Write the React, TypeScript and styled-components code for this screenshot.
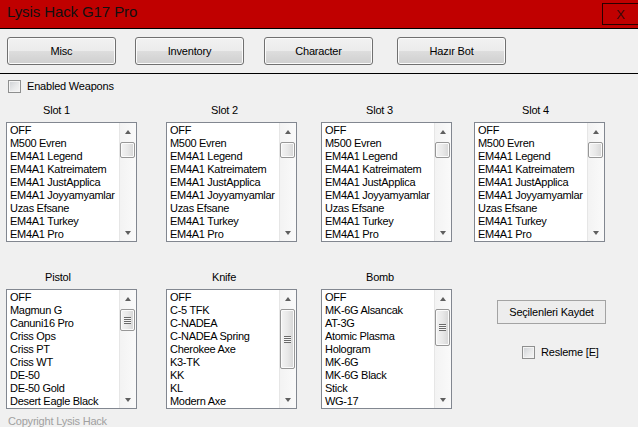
import React from 'react';
import styled, { createGlobalStyle } from 'styled-components';

const GlobalStyle = createGlobalStyle`
  html, body {
    margin: 0;
    padding: 0;
    background: #f0f0f0;
    overflow: hidden;
  }
  * {
    box-sizing: border-box;
  }
`;

const Window = styled.div`
  width: 638px;
  height: 427px;
  background: #f0f0f0;
  display: flex;
  flex-direction: column;
  overflow: hidden;
  font-family: "Liberation Sans", Arial, sans-serif;
  font-size: 11px;
  letter-spacing: -0.2px;
  color: #000;
`;

const TitleBar = styled.div`
  height: 29px;
  flex-shrink: 0;
  background: #c00000;
  border-bottom: 1px solid #000;
  display: flex;
  justify-content: space-between;
  align-items: flex-start;
  padding-left: 7px;
`;

const Title = styled.div`
  font-size: 15px;
  line-height: 24px;
  letter-spacing: -0.1px;
  color: #111;
`;

const CloseButton = styled.div`
  margin-top: 3px;
  width: 36px;
  height: 22px;
  border: 1px solid #2a0000;
  border-right: none;
  display: flex;
  align-items: center;
  justify-content: center;
  font-size: 13px;
  color: #3a0a0a;
`;

const Toolbar = styled.div`
  display: grid;
  grid-template-columns: 128px 129px 133px 109px;
  padding: 8px 0 8px 7px;
  border-bottom: 1px solid #000;
`;

const WinButton = styled.div`
  width: 109px;
  height: 28px;
  border: 1px solid #707070;
  border-radius: 3px;
  background: linear-gradient(to bottom, #f2f2f2 0%, #ebebeb 50%, #dddddd 51%, #cfcfcf 100%);
  box-shadow: inset 0 0 0 1px #fbfbfb;
  display: flex;
  align-items: center;
  justify-content: center;
  line-height: 13px;
`;

const FlatButton = styled.div`
  width: 109px;
  height: 24px;
  margin: 29px 0 0 23px;
  border: 1px solid #a3a3a3;
  background: #ededed;
  display: flex;
  align-items: center;
  justify-content: center;
`;

const CheckRow = styled.label<{ $left: number; $top: number }>`
  display: flex;
  align-items: center;
  gap: 6px;
  margin: ${(p) => p.$top}px 0 0 ${(p) => p.$left}px;
  height: 13px;
  line-height: 13px;
`;

const CheckBox = styled.span`
  width: 13px;
  height: 13px;
  flex-shrink: 0;
  border: 1px solid #8e8f8f;
  background: linear-gradient(135deg, #cdd0d4 0%, #e8e9ea 55%, #f6f6f6 100%);
  box-shadow: inset 0 0 0 1px #f4f4f4;
`;

const SlotGrid = styled.div`
  display: grid;
  grid-template-columns: 160px 155px 153px 1fr;
  row-gap: 29px;
  margin-top: 11px;
  padding-left: 6px;
`;

const Cell = styled.div`
  display: flex;
  flex-direction: column;
`;

const SlotLabel = styled.div<{ $offset: number }>`
  height: 13px;
  line-height: 13px;
  padding-left: ${(p) => p.$offset}px;
  margin-bottom: 5px;
`;

const ListBox = styled.div`
  width: 131px;
  height: 120px;
  border: 1px solid #828790;
  background: #fff;
  display: flex;
`;

const Items = styled.div`
  flex: 1;
  padding: 1px 0 0 3px;
  overflow: hidden;
  letter-spacing: -0.3px;
`;

const Item = styled.div`
  height: 13px;
  line-height: 13px;
  white-space: nowrap;
`;

const ScrollBar = styled.div`
  width: 17px;
  display: flex;
  flex-direction: column;
  background: linear-gradient(to right, #e6e6e6 0, #e6e6e6 1px, #f3f3f3 1px, #fafafa 100%);
`;

const Arrow = styled.div<{ $down?: boolean }>`
  height: 17px;
  flex-shrink: 0;
  display: flex;
  align-items: center;
  justify-content: center;
  &::after {
    content: '';
    border-left: 3.5px solid transparent;
    border-right: 3.5px solid transparent;
    ${(p) => (p.$down ? 'border-top: 4px solid #5f5f5f;' : 'border-bottom: 4px solid #5f5f5f;')}
  }
`;

const Thumb = styled.div<{ $height: number }>`
  height: ${(p) => p.$height}px;
  margin: 2px 1px 0 1px;
  border: 1px solid #979797;
  border-radius: 2px;
  background: linear-gradient(to right, #f3f3f3 0%, #e8e8e8 50%, #d6d6d6 100%);
  box-shadow: inset 0 0 0 1px #fbfbfb;
  display: flex;
  align-items: center;
  justify-content: center;
`;

const Grip = styled.span`
  width: 7px;
  height: 7px;
  background: repeating-linear-gradient(to bottom, #6a6a6a 0 1px, #f6f6f6 1px 2px);
`;

const Spacer = styled.div`
  flex: 1;
`;

const Copyright = styled.div`
  margin: 6px 0 0 8px;
  line-height: 13px;
  color: #a0a0a0;
`;

const weapons = [
  'OFF',
  'M500 Evren',
  'EM4A1 Legend',
  'EM4A1 Katreimatem',
  'EM4A1 JustApplica',
  'EM4A1 Joyyamyamlar',
  'Uzas Efsane',
  'EM4A1 Turkey',
  'EM4A1 Pro',
];

const pistols = [
  'OFF',
  'Magmun G',
  'Canuni16 Pro',
  'Criss Ops',
  'Criss PT',
  'Criss WT',
  'DE-50',
  'DE-50 Gold',
  'Desert Eagle Black',
];

const knives = [
  'OFF',
  'C-5 TFK',
  'C-NADEA',
  'C-NADEA Spring',
  'Cherokee Axe',
  'K3-TK',
  'KK',
  'KL',
  'Modern Axe',
];

const bombs = [
  'OFF',
  'MK-6G Alsancak',
  'AT-3G',
  'Atomic Plasma',
  'Hologram',
  'MK-6G',
  'MK-6G Black',
  'Stick',
  'WG-17',
];

type ListProps = {
  label: string;
  offset: number;
  items: string[];
  thumb: number;
};

const WeaponList: React.FC<ListProps> = ({ label, offset, items, thumb }) => (
  <Cell>
    <SlotLabel $offset={offset}>{label}</SlotLabel>
    <ListBox>
      <Items>
        {items.map((it) => (
          <Item key={it}>{it}</Item>
        ))}
      </Items>
      <ScrollBar>
        <Arrow />
        <Thumb $height={thumb}>{thumb > 18 && <Grip />}</Thumb>
        <Spacer />
        <Arrow $down />
      </ScrollBar>
    </ListBox>
  </Cell>
);

const App: React.FC = () => {
  return (
    <Window>
      <GlobalStyle />
      <TitleBar>
        <Title>Lysis Hack G17 Pro</Title>
        <CloseButton>X</CloseButton>
      </TitleBar>
      <Toolbar>
        <WinButton>Misc</WinButton>
        <WinButton>Inventory</WinButton>
        <WinButton>Character</WinButton>
        <WinButton>Hazır Bot</WinButton>
      </Toolbar>
      <CheckRow $left={8} $top={6}>
        <CheckBox />
        Enabled Weapons
      </CheckRow>
      <SlotGrid>
        <WeaponList label="Slot 1" offset={37} items={weapons} thumb={16} />
        <WeaponList label="Slot 2" offset={45} items={weapons} thumb={16} />
        <WeaponList label="Slot 3" offset={45} items={weapons} thumb={16} />
        <WeaponList label="Slot 4" offset={48} items={weapons} thumb={16} />
        <WeaponList label="Pistol" offset={39} items={pistols} thumb={22} />
        <WeaponList label="Knife" offset={46} items={knives} thumb={60} />
        <WeaponList label="Bomb" offset={45} items={bombs} thumb={37} />
        <Cell>
          <FlatButton>Seçilenleri Kaydet</FlatButton>
          <CheckRow $left={48} $top={22}>
            <CheckBox />
            Resleme [E]
          </CheckRow>
        </Cell>
      </SlotGrid>
      <Copyright>Copyright Lysis Hack</Copyright>
    </Window>
  );
};

export default App;
